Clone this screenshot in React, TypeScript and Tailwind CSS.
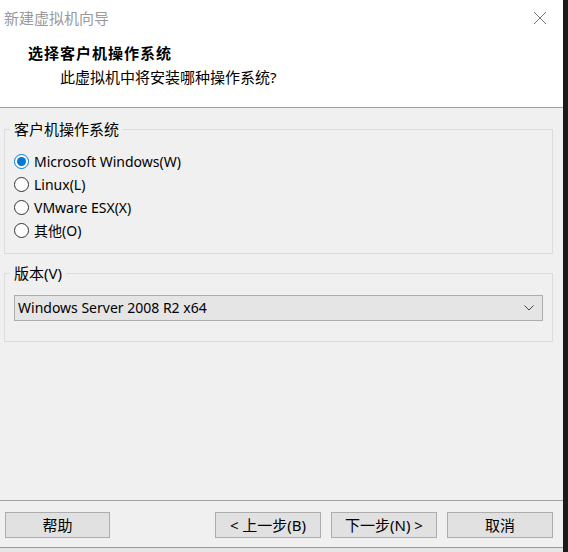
const font = { fontFamily: '"Noto Sans", "Noto Sans CJK SC", sans-serif' };

type RadioProps = { label: string; checked?: boolean };

function Radio({ label, checked }: RadioProps) {
  return (
    <label className="flex items-center h-[23px] pl-[9px] text-[14px] text-black leading-none">
      {checked ? (
        <span className="w-[15px] h-[15px] rounded-full border border-[#0078d7] bg-white flex items-center justify-center">
          <span className="w-[9px] h-[9px] rounded-full bg-[#0078d7]" />
        </span>
      ) : (
        <span className="w-[15px] h-[15px] rounded-full border border-[#333] bg-white" />
      )}
      <span className="ml-[5px]">{label}</span>
    </label>
  );
}

function Btn({ label, w }: { label: string; w: string }) {
  return (
    <button
      className={`${w} h-[26px] bg-[#e1e1e1] border border-[#adadad] text-[15px] text-black leading-none flex items-center justify-center`}
    >
      {label}
    </button>
  );
}

export default function App() {
  return (
    <div className="w-[568px] h-[552px] flex bg-[#1b1b1b] overflow-hidden" style={font}>
      <div className="w-[563px] flex flex-col">
        <div className="h-[547px] flex flex-col bg-[#f0f0f0]">
          {/* header */}
          <div className="h-[108px] bg-white border-b border-[#a0a0a0] flex flex-col">
            <div className="h-[36px] flex items-center justify-between pl-[4px] pr-[15px]">
              <span className="text-[15px] text-[#9a9a9a]">新建虚拟机向导</span>
              <svg width="14" height="14" viewBox="0 0 14 14" className="mr-[1px]">
                <path d="M1 1L13 13M13 1L1 13" stroke="#777" strokeWidth="1" />
              </svg>
            </div>
            <div className="pl-[28px] pt-[6px] text-[15px] font-bold text-black tracking-[1px] leading-[22px]">
              选择客户机操作系统
            </div>
            <div className="pl-[60px] pt-[2px] text-[15px] text-black leading-[22px]">
              此虚拟机中将安装哪种操作系统?
            </div>
          </div>

          {/* body */}
          <div className="flex-1 flex flex-col pl-[4px] pr-[10px]">
            <fieldset className="mt-[11px] border border-[#dcdcdc] pl-[5px] pr-[9px] pt-[11px] pb-[11px]">
              <legend className="px-[4px] text-[15px] leading-[20px] text-black">客户机操作系统</legend>
              <div className="-ml-[5px] flex flex-col">
                <Radio label="Microsoft Windows(W)" checked />
                <Radio label="Linux(L)" />
                <Radio label="VMware ESX(X)" />
                <Radio label="其他(O)" />
              </div>
            </fieldset>

            <fieldset className="mt-[9px] border border-[#dcdcdc] pl-[5px] pr-[9px] pt-[12px] pb-[20px]">
              <legend className="px-[4px] text-[15px] leading-[20px] text-black">版本(V)</legend>
              <div className="ml-[4px] h-[26px] bg-[#e5e5e5] border border-[#adadad] flex items-center justify-between pl-[3px] pr-[8px]">
                <span className="text-[14px] text-black leading-none">Windows Server 2008 R2 x64</span>
                <svg width="10" height="6" viewBox="0 0 10 6">
                  <path d="M0.5 0.5L5 5L9.5 0.5" fill="none" stroke="#444" strokeWidth="1" />
                </svg>
              </div>
            </fieldset>
          </div>

          {/* footer */}
          <div className="border-t border-[#a0a0a0] pt-[11px] pb-[9px] pl-[5px] pr-[10px] flex items-center">
            <Btn label="帮助" w="w-[105px]" />
            <div className="ml-auto flex items-center gap-[10px]">
              <Btn label="< 上一步(B)" w="w-[106px]" />
              <Btn label="下一步(N) >" w="w-[106px]" />
            </div>
            <div className="ml-[10px]">
              <Btn label="取消" w="w-[106px]" />
            </div>
          </div>
        </div>
        <div className="flex-1 bg-[#e6e6e6] border-t border-[#9a9a9a]" />
      </div>
      <div className="flex-1 bg-[#1b1b1b]" />
    </div>
  );
}
